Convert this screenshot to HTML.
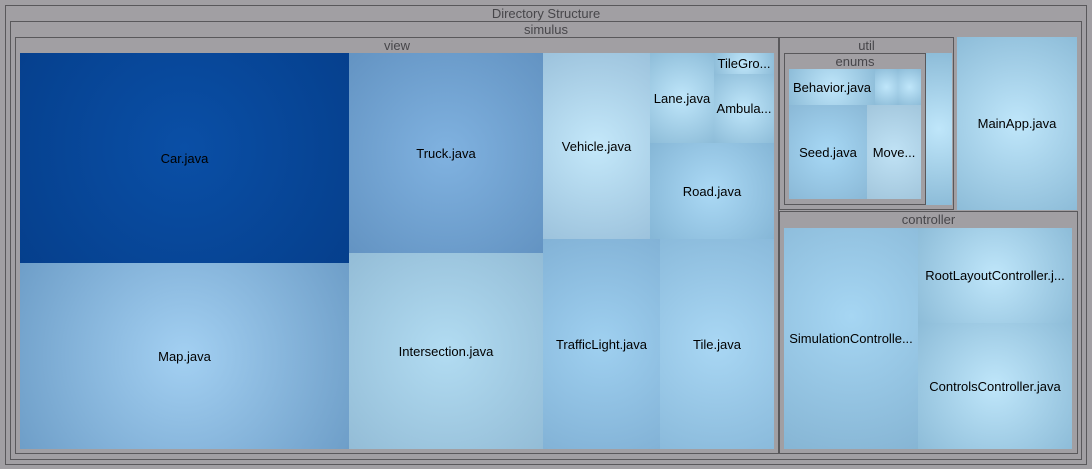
<!DOCTYPE html><html><head><style>
body{margin:0;width:1092px;height:469px;background:#a19fa3;position:relative;overflow:hidden;font-family:"Liberation Sans",sans-serif;font-size:13px}
.b{position:absolute;border:1px solid #59585b;box-sizing:border-box}
.t{position:absolute;color:#47464a;text-align:center;font-size:13px;line-height:14px}
.l{position:absolute;display:flex;align-items:center;justify-content:center;color:#000;white-space:nowrap;overflow:hidden;background:radial-gradient(circle at 50% 50%,#bfe6fa,#8dbcd8)}
</style></head><body>
<div class="b" style="left:5px;top:5px;width:1082px;height:460px"></div>
<div class="t" style="left:5px;top:7px;width:1082px">Directory Structure</div>
<div class="b" style="left:10px;top:21px;width:1072px;height:439px"></div>
<div class="t" style="left:10px;top:23px;width:1072px">simulus</div>
<div class="b" style="left:15px;top:37px;width:764px;height:417px"></div>
<div class="t" style="left:15px;top:39px;width:764px">view</div>
<div class="l" style="left:20px;top:53px;width:329px;height:210px;background:radial-gradient(circle at 50% 45%,#0a4fa6,#053f8c)">Car.java</div>
<div class="l" style="left:20px;top:263px;width:329px;height:186px;background:radial-gradient(circle at 50% 50%,#a3d0f2,#6e9ec8)">Map.java</div>
<div class="l" style="left:349px;top:53px;width:194px;height:200px;background:radial-gradient(circle at 50% 50%,#80b2e0,#6393c2)">Truck.java</div>
<div class="l" style="left:349px;top:253px;width:194px;height:196px;background:radial-gradient(circle at 50% 50%,#b2dcf2,#93bcd6)">Intersection.java</div>
<div class="l" style="left:543px;top:53px;width:107px;height:186px;background:radial-gradient(circle at 50% 50%,#c4e8fa,#9cc2dc)">Vehicle.java</div>
<div class="l" style="left:650px;top:53px;width:64px;height:90px">Lane.java</div>
<div class="l" style="left:714px;top:53px;width:60px;height:21px">TileGro...</div>
<div class="l" style="left:714px;top:74px;width:60px;height:69px">Ambula...</div>
<div class="l" style="left:650px;top:143px;width:124px;height:96px;background:radial-gradient(circle at 50% 50%,#abd9f5,#85b6d6)">Road.java</div>
<div class="l" style="left:543px;top:239px;width:117px;height:210px;background:radial-gradient(circle at 50% 50%,#9fd0f0,#82b2d6)">TrafficLight.java</div>
<div class="l" style="left:660px;top:239px;width:114px;height:210px;background:radial-gradient(circle at 50% 50%,#a9d7f4,#8abadb)">Tile.java</div>
<div class="b" style="left:779px;top:37px;width:175px;height:173px"></div>
<div class="t" style="left:779px;top:39px;width:175px">util</div>
<div class="b" style="left:784px;top:53px;width:142px;height:152px"></div>
<div class="t" style="left:784px;top:55px;width:142px">enums</div>
<div class="l" style="left:789px;top:69px;width:86px;height:36px">Behavior.java</div>
<div class="l" style="left:875px;top:69px;width:23px;height:36px"></div>
<div class="l" style="left:898px;top:69px;width:23px;height:36px"></div>
<div class="l" style="left:789px;top:105px;width:78px;height:94px;background:radial-gradient(circle at 50% 50%,#a7d8f5,#8ab8d6)">Seed.java</div>
<div class="l" style="left:867px;top:105px;width:54px;height:94px;background:radial-gradient(circle at 50% 50%,#c0e2f5,#a2c6dc)">Move...</div>
<div class="l" style="left:926px;top:53px;width:26px;height:152px"></div>
<div class="l" style="left:957px;top:37px;width:120px;height:173px">MainApp.java</div>
<div class="b" style="left:779px;top:211px;width:299px;height:243px"></div>
<div class="t" style="left:779px;top:213px;width:299px">controller</div>
<div class="l" style="left:784px;top:228px;width:134px;height:221px;background:radial-gradient(circle at 50% 40%,#a6d6f3,#86b5d4)">SimulationControlle...</div>
<div class="l" style="left:918px;top:228px;width:154px;height:95px">RootLayoutController.j...</div>
<div class="l" style="left:918px;top:323px;width:154px;height:126px">ControlsController.java</div>
</body></html>
